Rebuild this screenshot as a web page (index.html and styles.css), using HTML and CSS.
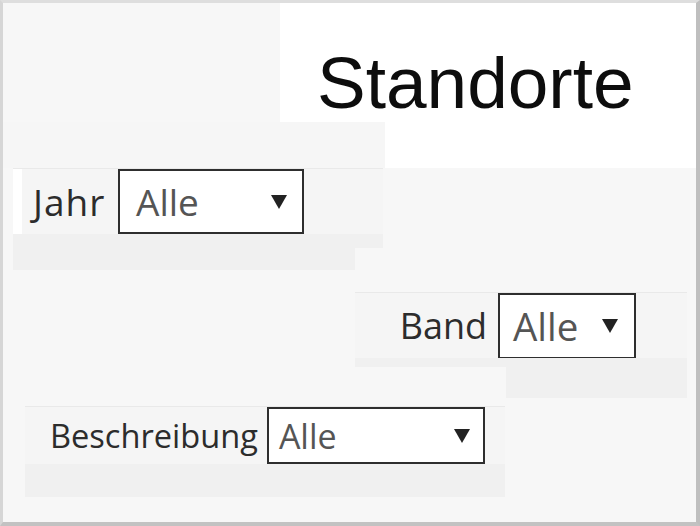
FILE: index.html
```html
<!DOCTYPE html>
<html lang="de">
<head>
<meta charset="utf-8">
<title>Standorte</title>
<link rel="stylesheet" href="styles.css">
</head>
<body>
<div class="frame">
  <div class="header">
    <div class="hd-blank"></div>
    <div class="hd-title"><h1 class="title">Standorte</h1></div>
    <div class="hd-gap"></div>
    <div class="hd-white"></div>
  </div>

  <div class="group group-jahr">
    <div class="field">
      <span class="edge"></span>
      <label class="label">Jahr</label>
      <div class="select sel-jahr"><span class="val">Alle</span><svg class="arrow" viewBox="0 0 16 14" width="16" height="14"><polygon points="0,0 16,0 8,14"/></svg></div>
    </div>
    <div class="strip strip-a"></div>
    <div class="strip strip-b"></div>
  </div>

  <div class="group group-band">
    <div class="field field-right">
      <label class="label">Band</label>
      <div class="select sel-band"><span class="val">Alle</span><svg class="arrow" viewBox="0 0 16 14" width="16" height="14"><polygon points="0,0 16,0 8,14"/></svg></div>
    </div>
    <div class="strip strip-c"></div>
    <div class="strip strip-d"></div>
  </div>

  <div class="group group-besch">
    <div class="field field-small">
      <label class="label">Beschreibung</label>
      <div class="select sel-besch"><span class="val">Alle</span><svg class="arrow" viewBox="0 0 16 14" width="16" height="14"><polygon points="0,0 16,0 8,14"/></svg></div>
    </div>
    <div class="strip strip-e"></div>
  </div>
</div>
</body>
</html>
```

FILE: styles.css
```css
* { box-sizing: border-box; }

html, body {
  margin: 0;
  padding: 0;
}

body {
  background: #f7f7f7;
  font-family: "Open Sans", "Noto Sans", sans-serif;
}

.frame {
  width: 700px;
  height: 526px;
  background: #f7f7f7;
  border-top: 3px solid #dedede;
  border-left: 3px solid #d6d6d6;
  border-right: 4px solid #bfbfbf;
  border-bottom: 4px solid #c2c2c2;
  display: flex;
  flex-direction: column;
  overflow: hidden;
}

/* header */
.header {
  display: grid;
  grid-template-columns: 277px 105px 1fr;
  grid-template-rows: 119px 46px;
  height: 165px;
}

.hd-blank { grid-column: 1; grid-row: 1; background: #f7f7f7; }
.hd-title {
  grid-column: 2 / 4;
  grid-row: 1;
  background: #ffffff;
  padding: 44px 0 0 37px;
}
.hd-gap { grid-column: 1 / 3; grid-row: 2; background: #f6f6f6; }
.hd-white { grid-column: 3; grid-row: 2; background: #ffffff; }

.title {
  margin: 0;
  font-family: "Liberation Sans", Arial, sans-serif;
  font-weight: normal;
  font-size: 73px;
  line-height: 72px;
  color: #0d0d0d;
}

/* groups */
.group {
  display: flex;
  flex-direction: column;
}

.field {
  display: flex;
  align-items: center;
  border-top: 1px solid #e9e9e9;
  background: #f5f5f5;
}

.edge {
  align-self: stretch;
  width: 9px;
  background: #ffffff;
}

.label {
  font-size: 36px;
  color: #2c2c2c;
  line-height: 49px;
  white-space: nowrap;
}

.select {
  display: flex;
  align-items: center;
  justify-content: space-between;
  background: #ffffff;
  border: 2px solid #2e2e2e;
  color: #555;
  line-height: 48px;
}

.arrow { fill: #222; flex: none; }

.strip { background: #f0f0f0; }

/* Jahr */
.group-jahr {
  margin-left: 10px;
  width: 370px;
}
.group-jahr .field { height: 66px; }
.group-jahr .label {
  width: 77px;
  margin: 0 8px 0 11px;
  font-size: 37px;
  letter-spacing: 1px;
}
.sel-jahr {
  width: 186px;
  height: 65px;
  font-size: 37px;
  padding: 0 15px 0 16px;
}
.strip-a { height: 14px; }
.strip-b { height: 22px; width: 342px; }

/* Band */
.group-band {
  margin-top: 22px;
  margin-left: 352px;
  width: 332px;
}
.field-right {
  justify-content: flex-end;
  padding-right: 51px;
  height: 66px;
}
.group-band .label { margin-right: 11px; }
.sel-band {
  width: 138px;
  height: 66px;
  font-size: 38.5px;
  padding: 0 16px 0 13px;
}
.strip-c { height: 9px; }
.strip-d { height: 31px; margin-left: 151px; }

/* Beschreibung */
.group-besch {
  margin-top: 8px;
  margin-left: 22px;
  width: 480px;
}
.field-small {
  height: 58px;
  padding-left: 25px;
}
.field-small .label {
  font-size: 32.6px;
  margin-right: 9px;
}
.sel-besch {
  width: 218px;
  height: 57px;
  font-size: 34px;
  padding: 0 13px 0 10px;
}
.strip-e { height: 33px; }
```
